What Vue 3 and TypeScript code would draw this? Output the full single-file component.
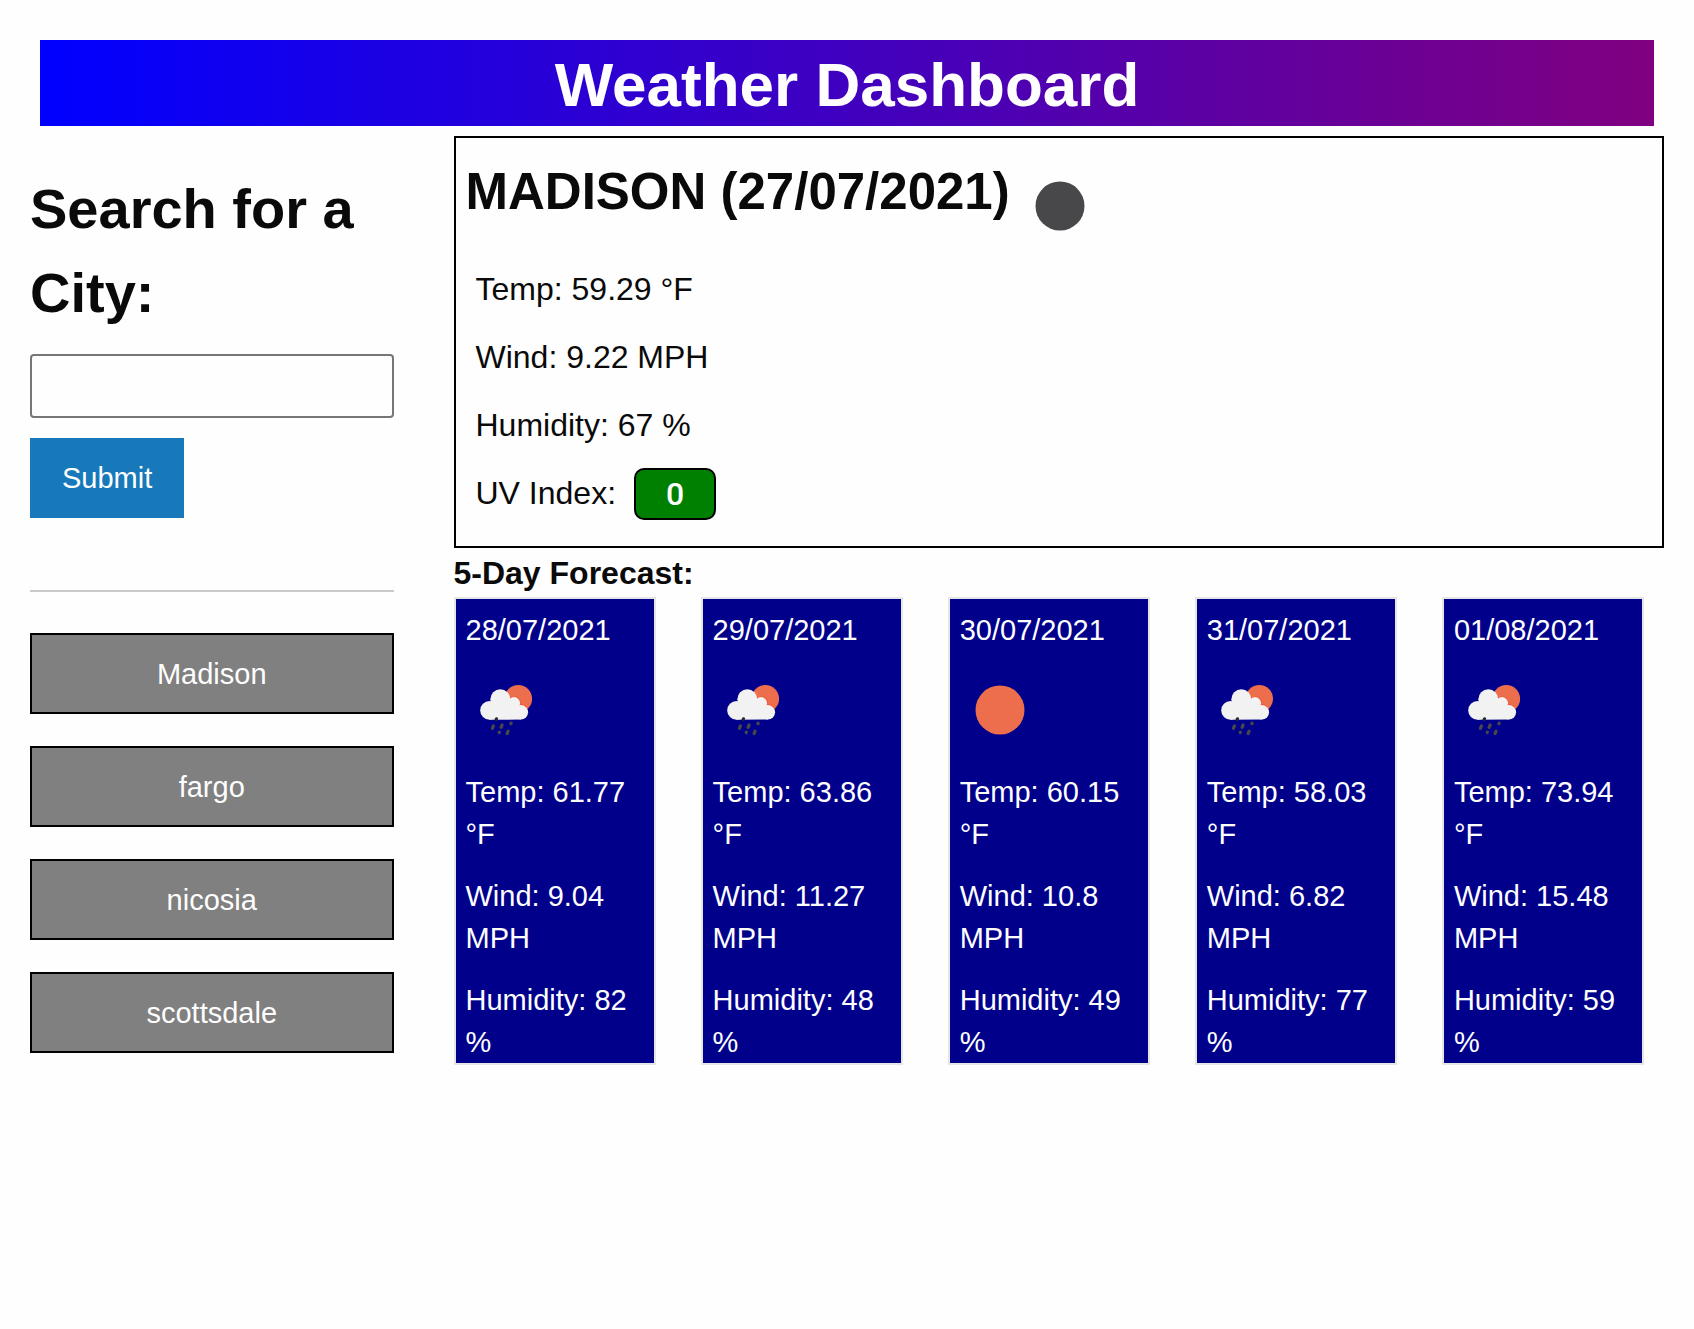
<script setup lang="ts">
import { ref } from 'vue'

type Sky = 'clear' | 'rain'

interface Forecast {
  date: string
  sky: Sky
  temp: string
  wind: string
  humidity: string
}

const query = ref('')
const cities = ref<string[]>(['Madison', 'fargo', 'nicosia', 'scottsdale'])

const current = ref({
  city: 'Madison',
  date: '27/07/2021',
  temp: '59.29',
  wind: '9.22',
  humidity: '67',
  uv: '0',
})

const forecast: Forecast[] = [
  { date: '28/07/2021', sky: 'rain', temp: '61.77', wind: '9.04', humidity: '82' },
  { date: '29/07/2021', sky: 'rain', temp: '63.86', wind: '11.27', humidity: '48' },
  { date: '30/07/2021', sky: 'clear', temp: '60.15', wind: '10.8', humidity: '49' },
  { date: '31/07/2021', sky: 'rain', temp: '58.03', wind: '6.82', humidity: '77' },
  { date: '01/08/2021', sky: 'rain', temp: '73.94', wind: '15.48', humidity: '59' },
]

function addCity() {
  const name = query.value.trim()
  if (name && !cities.value.includes(name)) {
    cities.value.push(name)
  }
  query.value = ''
}

function selectCity(name: string) {
  current.value.city = name
}
</script>

<template>
  <div class="page">
    <header class="banner">
      <h1>Weather Dashboard</h1>
    </header>

    <div class="layout">
      <aside class="sidebar">
        <form @submit.prevent="addCity">
          <label class="search-label" for="city">Search for a City:</label>
          <input id="city" v-model="query" class="search-input" type="text" autocomplete="off" />
          <button class="submit" type="submit">Submit</button>
        </form>
        <hr class="rule" />
        <div class="history">
          <button
            v-for="name in cities"
            :key="name"
            class="city"
            type="button"
            @click="selectCity(name)"
          >
            {{ name }}
          </button>
        </div>
      </aside>

      <main class="content">
        <section class="current">
          <div class="current-head">
            <h2>{{ current.city.toUpperCase() }} ({{ current.date }})</h2>
            <svg class="icon" viewBox="0 0 100 100" aria-hidden="true">
              <circle cx="50" cy="50" r="24.5" fill="#48484a" />
            </svg>
          </div>
          <div class="readings">
            <p>Temp: {{ current.temp }} °F</p>
            <p>Wind: {{ current.wind }} MPH</p>
            <p>Humidity: {{ current.humidity }} %</p>
            <p class="uv">UV Index: <span class="uv-badge">{{ current.uv }}</span></p>
          </div>
        </section>

        <h3 class="forecast-title">5-Day Forecast:</h3>
        <section class="forecast">
          <article v-for="day in forecast" :key="day.date" class="card">
            <p>{{ day.date }}</p>
            <svg v-if="day.sky === 'clear'" class="icon" viewBox="0 0 100 100" aria-hidden="true">
              <circle cx="50" cy="50" r="24.5" fill="#ec6e4c" />
            </svg>
            <svg v-else class="icon" viewBox="0 0 100 100" aria-hidden="true">
              <clipPath id="sun-disc">
                <circle cx="62.3" cy="38.8" r="13.8" />
              </clipPath>
              <circle cx="62.3" cy="38.8" r="13.8" fill="#ec6e4c" />
              <g fill="#f0512f" clip-path="url(#sun-disc)">
                <circle cx="58" cy="43.2" r="6.8" />
                <circle cx="64.8" cy="52.3" r="8" />
              </g>
              <g fill="#f2f2f2">
                <circle cx="33.5" cy="50.4" r="9.3" />
                <circle cx="44.3" cy="39.3" r="10" />
                <circle cx="58" cy="43.2" r="6.1" />
                <circle cx="64.8" cy="52.3" r="7.3" />
                <path d="M33.5 59.7 L33.5 45 L40 42 L58 40 L63 48 L65 59.6 Z" />
              </g>
              <g stroke="#484848" stroke-width="3.2" stroke-linecap="round">
                <path d="M36.4 68.3 L37.4 66" />
                <path d="M45.1 67.3 L46.1 65" />
                <path d="M54.9 63.6 L55.2 63.1" />
                <path d="M43.2 72.5 L43.4 72.1" />
                <path d="M51.1 73.5 L52.1 71.2" />
                <path d="M40.2 59.4 L40.5 58.8" stroke="#2b2b2b" />
              </g>
            </svg>
            <p>Temp: {{ day.temp }} °F</p>
            <p>Wind: {{ day.wind }} MPH</p>
            <p>Humidity: {{ day.humidity }} %</p>
          </article>
        </section>
      </main>
    </div>
  </div>
</template>

<style>
body {
  background: #fefefe;
}
</style>

<style scoped>
.page {
  padding-top: 40px;
  color: #0a0a0a;
  font-family: 'Liberation Sans', Arial, sans-serif;
  font-size: 32px;
  line-height: 48px;
}

.page * {
  box-sizing: border-box;
}

h1,
h2,
h3,
p {
  margin: 0;
}

button,
input {
  font-family: inherit;
  font-size: 29px;
}

.banner {
  margin: 0 40px 10px;
  padding-top: 4px;
  background: linear-gradient(to right, blue, purple);
  color: #fefefe;
  text-align: center;
}

.banner h1 {
  font-size: 62px;
  line-height: 82px;
}

.layout {
  display: grid;
  grid-template-columns: 1fr 3fr;
}

.sidebar {
  min-width: 0;
  padding: 31px 30px 0;
}

.content {
  min-width: 0;
  padding: 0 30px;
}

.search-label {
  display: block;
  margin-bottom: 19px;
  font-size: 56px;
  font-weight: bold;
  line-height: 84px;
}

.search-input {
  display: block;
  width: 100%;
  height: 64px;
  padding: 0 10px;
  border: 2px solid #767676;
  border-radius: 4px;
  background: #fefefe;
  color: #0a0a0a;
}

.submit {
  display: block;
  height: 80px;
  margin-top: 20px;
  padding: 0 32px;
  border: 0;
  background: #1779ba;
  color: #fefefe;
  cursor: pointer;
}

.rule {
  height: 2px;
  margin: 72px 0 41px;
  border: 0;
  background: #cacaca;
}

.history {
  display: grid;
  gap: 32px;
}

.city {
  height: 81px;
  padding: 2px 0 0;
  border: 2px solid #000;
  background: #808080;
  color: #fefefe;
  cursor: pointer;
}

.current {
  padding: 18px 10px 29px;
  border: 2px solid #000;
}

.current-head {
  display: flex;
  align-items: flex-start;
}

.current-head h2 {
  font-size: 51px;
  line-height: 71px;
}

.icon {
  display: block;
  flex: none;
  width: 100px;
  height: 100px;
}

.readings {
  display: grid;
  gap: 20px;
  padding: 9px 10px 0;
}

.uv {
  display: flex;
  align-items: center;
  gap: 18px;
}

.uv-badge {
  width: 82px;
  margin: -1px 0 -3px;
  border: 2px solid #000;
  border-radius: 10px;
  background: green;
  color: #fefefe;
  font-family: Roboto, 'Liberation Sans', sans-serif;
  font-weight: 500;
  text-align: center;
}

.forecast-title {
  padding-top: 2px;
  font-size: 32px;
  line-height: 47px;
}

.forecast {
  display: grid;
  grid-template-columns: repeat(5, 1fr);
  gap: 45px;
  padding-right: 20px;
}

.card {
  padding-top: 10px;
  border: 2px solid #e6e6e6;
  background: darkblue;
  color: #fefefe;
  font-size: 29px;
  line-height: 42px;
}

.card p {
  padding: 0 10px;
}

.card .icon {
  margin: 9px 0 11px;
}

.card p + p {
  margin-top: 20px;
}
</style>
